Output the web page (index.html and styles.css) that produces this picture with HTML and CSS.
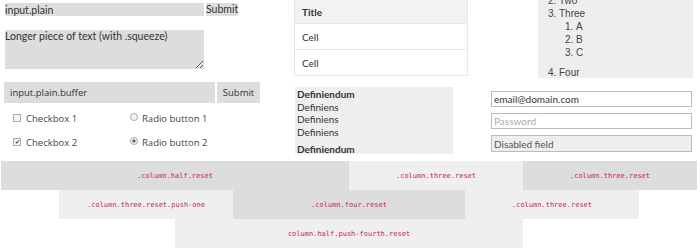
FILE: index.html
```html
<!DOCTYPE html>
<html lang="en">
<head>
    <meta charset="UTF-8">
    <meta name="viewport" content="width=device-width, initial-scale=1.0">
    <title>Grid Demo</title>
    <link rel="stylesheet" href="styles.css">
</head>
<body>
    <div class="top">
        <div class="cell">
            <form class="plain-form">
                <div class="inline">
                    <input type="text" class="plain" value="input.plain">
                    <button type="button" class="plain-btn">Submit</button>
                </div>
                <textarea class="squeeze">Longer piece of text (with .squeeze)</textarea>
            </form>
        </div>
        <div class="cell">
            <table class="table">
                <thead><tr><th>Title</th></tr></thead>
                <tbody>
                    <tr><td>Cell</td></tr>
                    <tr><td>Cell</td></tr>
                </tbody>
            </table>
        </div>
        <div class="cell">
            <ol class="list">
                <li>One</li>
                <li>Two</li>
                <li>Three
                    <ol>
                        <li>A</li>
                        <li>B</li>
                        <li>C</li>
                    </ol>
                </li>
                <li>Four</li>
            </ol>
        </div>

        <div class="cell">
            <div class="inline buffer-row">
                <input type="text" class="plain buffer" value="input.plain.buffer">
                <button type="button" class="buffer-btn">Submit</button>
            </div>
            <div class="options">
                <label><span class="check"></span>Checkbox 1</label>
                <label><span class="radio"></span>Radio button 1</label>
                <label><span class="check on">&#10004;</span>Checkbox 2</label>
                <label><span class="radio on"></span>Radio button 2</label>
            </div>
        </div>
        <div class="cell">
            <dl class="defs">
                <dt>Definiendum</dt>
                <dd>Definiens</dd>
                <dd>Definiens</dd>
                <dd>Definiens</dd>
                <dt>Definiendum</dt>
            </dl>
        </div>
        <div class="cell">
            <form class="fields">
                <input type="text" value="email@domain.com">
                <input type="password" placeholder="Password">
                <input type="text" value="Disabled field" disabled>
            </form>
        </div>
    </div>

    <div class="grid">
        <div class="col half dark">.column.half.reset</div>
        <div class="col three light">.column.three.reset</div>
        <div class="col three dark">.column.three.reset</div>

        <div class="col three light push-one">.column.three.reset.push-one</div>
        <div class="col four dark">.column.four.reset</div>
        <div class="col three light">.column.three.reset</div>

        <div class="col half light push-fourth">column.half.push-fourth.reset</div>
    </div>
</body>
</html>
```

FILE: styles.css
```css
body {
    margin: 0;
    font-family: Lato, "Open Sans", sans-serif;
    font-size: 10px;
    color: #333;
    background: #fff;
    overflow: hidden;
}
.top {
    display: grid;
    grid-template-columns: 290px 194px 1fr;
    grid-template-rows: 78px 83px;
}
.cell {
    min-width: 0;
}

/* plain inputs */
.plain-form {
    padding: 3px 0 0 5px;
}
.inline {
    display: flex;
    gap: 2px;
}
input, textarea, button {
    font-family: Lato, sans-serif;
    font-size: 10.5px;
    color: #333;
    margin: 0;
    outline: none;
}
.plain {
    width: 199px;
    height: 13px;
    padding: 0;
    border: none;
    background: #ddd;
    box-sizing: border-box;
}
.plain-btn {
    height: 13px;
    padding: 0;
    border: none;
    background: #ddd;
    line-height: 13px;
}
.squeeze {
    display: block;
    width: 199px;
    height: 39px;
    margin-top: 14px;
    padding: 0;
    border: none;
    background: #ddd;
    box-sizing: border-box;
    line-height: 12px;
    resize: both;
}

/* table */
.table {
    margin-left: 4px;
    width: 174px;
    border-collapse: collapse;
}
.table th, .table td {
    text-align: left;
    padding: 0 7px;
    border: 1px solid #e6e6e6;
}
.table th {
    background: #f2f2f2;
    height: 23px;
    font-weight: bold;
    border-top: none;
}
.table td {
    height: 25px;
}

/* ordered list */
.list {
    margin: -20px 7px 0 54px;
    padding: 1px 0 0 21px;
    height: 98px;
    box-sizing: border-box;
    background: #eee;
    font-family: "Liberation Sans", Arial, sans-serif;
    font-size: 10px;
    line-height: 13px;
    color: #444;
}
.list ol {
    margin: 0 0 7px;
    padding-left: 17px;
}

/* buffer row */
.buffer-row {
    padding: 4px 0 0 4px;
}
.buffer {
    width: 211px;
    height: 21px;
    padding-left: 6px;
    font-family: "Open Sans", sans-serif;
    font-size: 9.5px;
}
.buffer-btn {
    width: 43px;
    height: 21px;
    padding: 0;
    border: none;
    background: #ddd;
    font-family: "Open Sans", sans-serif;
    font-size: 9.5px;
}
.options {
    display: grid;
    grid-template-columns: 117px 1fr;
    padding: 3px 0 0 13px;
    font-family: "Open Sans", sans-serif;
    font-size: 9.5px;
    color: #444;
}
.options label {
    display: flex;
    align-items: center;
    height: 24px;
}
.check {
    width: 6px;
    height: 6px;
    border: 1px solid #aaa;
    background: #f4f4f4;
    margin-right: 5px;
    font-size: 6px;
    line-height: 6px;
    text-align: center;
    color: #333;
}
.radio {
    width: 6px;
    height: 6px;
    border: 1px solid #aaa;
    border-radius: 50%;
    background: #f4f4f4;
    margin-right: 4px;
    position: relative;
    top: -1px;
}
.radio.on {
    background: radial-gradient(circle, #555 1.3px, #f4f4f4 1.8px);
}

/* definition list */
.defs {
    margin: 9px 31px 0 5px;
    padding: 1px 2px;
    height: 67px;
    overflow: hidden;
    background: #eee;
    line-height: 12.5px;
    box-sizing: border-box;
}
.defs dt {
    font-weight: bold;
}
.defs dd {
    margin: 0;
}
.defs dd + dt {
    margin-top: 5px;
}

/* right fields */
.fields {
    display: flex;
    flex-direction: column;
    gap: 6px;
    margin: 13px 8px 0 7px;
}
.fields input {
    height: 16px;
    padding: 0 2px;
    border: 1px solid #bbb;
    background: #fff;
    box-sizing: border-box;
    font-size: 10px;
}
.fields input::placeholder {
    color: #aaa;
}
.fields input:disabled {
    height: 17px;
    background: #efeeea;
    color: #555;
}

/* column grid */
.grid {
    display: grid;
    grid-template-columns: repeat(12, 58px);
    grid-auto-rows: 29px;
    margin-left: 1px;
}
.col {
    display: flex;
    align-items: center;
    justify-content: center;
    font-family: "DejaVu Sans Mono", monospace;
    font-size: 7px;
    color: #c7254e;
}
.dark {
    background: #ddd;
}
.light {
    background: #efefef;
}
.half {
    grid-column: span 6;
}
.three {
    grid-column: span 3;
}
.four {
    grid-column: span 4;
}
.push-one {
    grid-column: 2 / span 3;
}
.push-fourth {
    grid-column: 4 / span 6;
}
```
